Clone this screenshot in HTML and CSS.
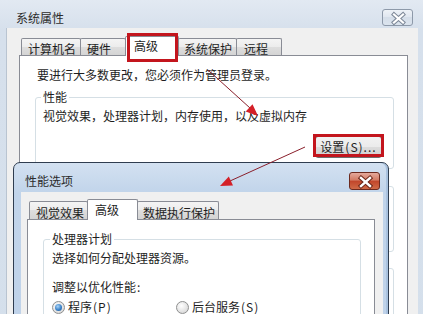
FILE: index.html
```html
<!DOCTYPE html>
<html lang="zh-CN">
<head>
<meta charset="utf-8">
<title>系统属性</title>
<link rel="stylesheet" href="styles.css">
</head>
<body>
<div class="desk">
  <div class="win-outer">
    <div class="titlebar outer-title">
      <span class="title">系统属性</span>
      <span class="close close-inactive">
        <svg width="31" height="17" viewBox="0 0 31 17"><path d="M11 4.5 L20 12.5 M20 4.5 L11 12.5" stroke="#7d8898" stroke-width="4.2" stroke-linecap="square" fill="none"/><path d="M11 4.5 L20 12.5 M20 4.5 L11 12.5" stroke="#ffffff" stroke-width="2.2" stroke-linecap="square" fill="none"/></svg>
      </span>
    </div>
    <div class="client outer-client">
      <div class="tabs">
        <div class="tab t-name">计算机名</div>
        <div class="tab t-hw">硬件</div>
        <div class="tab sel t-adv">高级</div>
        <div class="tab t-prot">系统保护</div>
        <div class="tab t-remote">远程</div>
      </div>
      <div class="panel outer-panel">
        <p class="note">要进行大多数更改，您必须作为管理员登录。</p>
        <fieldset class="group perf">
          <legend>性能</legend>
          <p class="gtext">视觉效果，处理器计划，内存使用，以及虚拟内存</p>
          <div class="btnrow"><button class="btn">设置<span class="lat">(S)...</span></button></div>
        </fieldset>
        <div class="group profiles"></div>
        <div class="group startup"></div>
      </div>
    </div>
  </div>

  <div class="dialog">
    <div class="titlebar dlg-title">
      <span class="title">性能选项</span>
      <span class="close close-active">
        <svg width="31" height="18" viewBox="0 0 31 18"><path d="M11 5 L20 13 M20 5 L11 13" stroke="#6a2417" stroke-width="4.4" stroke-linecap="square" fill="none"/><path d="M11 5 L20 13 M20 5 L11 13" stroke="#ffffff" stroke-width="2.4" stroke-linecap="square" fill="none"/></svg>
      </span>
    </div>
    <div class="client dlg-client">
      <div class="tabs dlg-tabs">
        <div class="tab t-visual">视觉效果</div>
        <div class="tab sel t-adv2">高级</div>
        <div class="tab t-dep">数据执行保护</div>
      </div>
      <div class="panel dlg-panel">
        <fieldset class="group cpu">
          <legend>处理器计划</legend>
          <p class="gtext">选择如何分配处理器资源。</p>
          <p class="gtext adjust">调整以优化性能<span class="lat">:</span></p>
          <div class="radios">
            <label class="radio r-first"><span class="dot on"></span>程序<span class="lat">(P)</span></label>
            <label class="radio"><span class="dot"></span>后台服务<span class="lat">(S)</span></label>
          </div>
        </fieldset>
      </div>
    </div>
  </div>

  <svg class="annot" width="423" height="314" viewBox="0 0 423 314">
    <rect x="128.5" y="34.5" width="48" height="26" fill="none" stroke="#c3151d" stroke-width="3"/>
    <rect x="314.5" y="135.5" width="68" height="20" fill="none" stroke="#c3151d" stroke-width="3"/>
    <line x1="208" y1="70" x2="250" y2="108" stroke="#8a1f2b" stroke-width="1"/>
    <polygon points="258,116 245.7,111.6 252.5,104.2" fill="#d42028"/>
    <line x1="305" y1="147" x2="230" y2="181" stroke="#8a1f2b" stroke-width="1"/>
    <polygon points="220,186 233,185.5 228.8,176.5" fill="#d42028"/>
  </svg>
</div>
</body>
</html>
```

FILE: styles.css
```css
* { box-sizing: border-box; margin: 0; padding: 0; }

html, body {
  width: 423px;
  height: 314px;
  overflow: hidden;
}

body {
  font-family: "Noto Sans CJK SC", "Noto Sans", sans-serif;
  font-size: 12px;
  line-height: 14px;
  color: #1e1e1e;
  background: #d9e3ee;
}

.desk {
  position: relative;
  width: 423px;
  height: 314px;
  overflow: hidden;
}

/* ---------- outer window ---------- */
.win-outer {
  width: 423px;
  height: 420px;
  padding: 0 5px 0 6px;
  background: linear-gradient(#e2e9f2, #d6e0ec 30px, #d4dfeb);
  display: flex;
  flex-direction: column;
}

.titlebar {
  display: flex;
  justify-content: space-between;
  align-items: flex-start;
  flex: none;
}

.outer-title {
  height: 28px;
  padding: 11px 5px 0 10px;
}

.title {
  color: #2c2c2c;
}

.close {
  display: block;
  width: 31px;
  border-radius: 3px;
}

.close svg { display: block; }

.close-inactive {
  height: 17px;
  margin-top: -2px;
  border: 1px solid #8d99a9;
  background: linear-gradient(#eef2f7, #dfe6ef 50%, #d5dee9 50%, #dbe4ee);
}

.client {
  background: #f0f0f0;
  display: flex;
  flex-direction: column;
  flex: 1;
}

.outer-client {
  padding: 7px 10px 0 12px;
  border-left: 1px solid #b9c4d1;
}

/* ---------- tabs ---------- */
.tabs {
  display: flex;
  align-items: flex-end;
  margin-left: 2px;
  position: relative;
  z-index: 2;
  height: 20px;
  flex: none;
}

.tab {
  height: 17px;
  padding: 3px 0 0 6px;
  border: 1px solid #898c95;
  border-bottom: none;
  border-radius: 2px 2px 0 0;
  background: linear-gradient(#f4f4f4, #ececec 50%, #dedede 50%, #d4d4d4);
  white-space: nowrap;
  margin-left: -1px;
}

.tab:first-child { margin-left: 0; }

.tab.sel {
  height: 20px;
  padding-top: 2px;
  background: #ffffff;
  margin-bottom: -1px;
  position: relative;
  z-index: 3;
}

.t-name { width: 60px; }
.t-hw { width: 46px; }
.t-adv { width: 54px; padding-left: 8px; }
.t-prot { width: 59px; padding-left: 5px; }
.t-remote { width: 46px; padding-left: 7px; }

.panel {
  background: #ffffff;
  border: 1px solid #898c95;
  flex: 1;
  position: relative;
  z-index: 1;
}

.outer-panel {
  padding: 12px 13px 0 15px;
}

.note {
  margin-left: 2px;
}

/* ---------- group boxes ---------- */
.group {
  border: 1px solid #d5dfe5;
  border-radius: 3px;
}

.group legend {
  padding: 0 2px;
  margin-left: -2px;
  line-height: 14px;
}

.perf {
  margin-top: 8px;
  padding: 0 11px 10px 7px;
  height: 79px;
}

.gtext {
  margin-top: 5px;
}

.btnrow {
  display: flex;
  justify-content: flex-end;
  margin-top: 13px;
}

.btn {
  width: 67px;
  height: 22px;
  font: inherit;
  color: #1e1e1e;
  border: 1px solid #707070;
  border-radius: 3px;
  background: linear-gradient(#f2f2f2, #ebebeb 50%, #dddddd 50%, #cfcfcf);
  display: flex;
  align-items: center;
  justify-content: center;
}

.lat {
  letter-spacing: 1px;
  margin-left: 1px;
}

.profiles {
  margin-top: 17px;
  height: 66px;
}

.startup {
  margin-top: 16px;
  height: 80px;
}

/* ---------- dialog ---------- */
.dialog {
  position: absolute;
  left: 13px;
  top: 162px;
  width: 376px;
  height: 200px;
  border: 1px solid #2f3d50;
  border-radius: 7px 7px 0 0;
  padding: 0 5px 0 7px;
  background: linear-gradient(#d3e1f1, #c1d4ea 30px, #bfd2e9);
  box-shadow: inset -2px 0 0 #a9c2df;
  display: flex;
  flex-direction: column;
  z-index: 5;
}

.dlg-title {
  height: 29px;
  padding: 11px 3px 0 4px;
}

.close-active {
  height: 18px;
  margin-top: -2px;
  border: 1px solid #6c2a1f;
  background: linear-gradient(#e5a99c, #d27a63 45%, #c1452a 50%, #cf6a47);
}

.dlg-client {
  padding: 6px 8px 0 6px;
}

.dlg-tabs {
  height: 21px;
}

.dlg-tabs .tab {
  height: 18px;
  padding-top: 4px;
}

.dlg-tabs .tab.sel {
  height: 21px;
  padding-top: 3px;
}

.t-visual { width: 59px; }
.t-adv2 { width: 51px; padding-left: 7px; }
.t-dep { width: 82px; padding-left: 5px; }

.dlg-panel {
  padding: 12px 13px 0 15px;
}

.cpu {
  padding: 0 8px 10px 8px;
  height: 110px;
}

.adjust {
  margin-top: 15px;
}

.radios {
  display: flex;
  align-items: center;
  margin-top: 6px;
}

.radio {
  display: flex;
  align-items: center;
  white-space: nowrap;
}

.r-first {
  width: 124px;
}

.dot {
  width: 13px;
  height: 13px;
  border-radius: 50%;
  border: 1px solid #8e8f8f;
  background: radial-gradient(circle at 40% 35%, #ffffff, #e2e2e2 60%, #cfcfcf);
  margin-right: 3px;
  position: relative;
  flex: none;
}

.dot.on::after {
  content: "";
  position: absolute;
  left: 2px;
  top: 2px;
  width: 7px;
  height: 7px;
  border-radius: 50%;
  background: radial-gradient(circle at 40% 35%, #a8d4f8, #3b82c8 55%, #1a4f8c);
}

/* ---------- annotations ---------- */
.annot {
  position: absolute;
  left: 0;
  top: 0;
  z-index: 10;
  pointer-events: none;
}
```
